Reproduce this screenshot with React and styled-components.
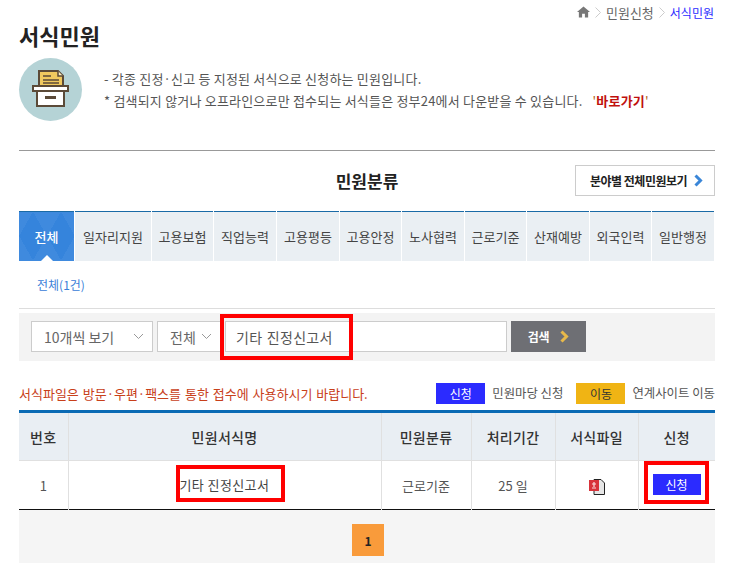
import React from 'react';
import styled, { createGlobalStyle } from 'styled-components';

const Global = createGlobalStyle`
  html, body {
    margin: 0;
    padding: 0;
    height: 563px;
    overflow: hidden;
    background: #fff;
  }
  body {
    font-family: "Noto Sans CJK KR", "Noto Sans", sans-serif;
    color: #555;
    font-size: 12px;
  }
  * { box-sizing: border-box; }
`;

const Page = styled.div`
  width: 696px;
  margin-left: 19px;
`;

const Crumbs = styled.div`
  display: flex;
  justify-content: flex-end;
  align-items: center;
  height: 24px;
  padding-right: 1px;
  font-size: 13px;
  color: #666;
  gap: 5px;
`;

const CrumbNow = styled.span`
  color: #2b2bff;
  font-size: 12px;
`;

const Title = styled.h1`
  margin: 0;
  height: 34px;
  font-size: 22px;
  line-height: 22px;
  font-weight: 700;
  color: #222;
`;

const Intro = styled.div`
  display: flex;
  align-items: center;
  gap: 22px;
  height: 63px;
`;

const IntroCircle = styled.div`
  width: 63px;
  height: 63px;
  padding-bottom: 2px;
  border-radius: 50%;
  background: #b5d3d6;
  display: flex;
  align-items: center;
  justify-content: center;
  flex: none;
`;

const IntroText = styled.div`
  font-size: 13px;
  letter-spacing: 0.2px;
  line-height: 22px;
  color: #555;
`;

const GoLink = styled.span`
  color: #b5651d;
  margin-left: 10px;
  b {
    color: #c0100c;
  }
`;

const Rule = styled.div`
  height: 1px;
  background: #999;
  margin-top: 29px;
`;

const ClassHead = styled.div`
  position: relative;
  display: flex;
  align-items: center;
  justify-content: center;
  height: 60px;
  padding-bottom: 1px;
`;

const ClassTitle = styled.h2`
  margin: 0;
  font-size: 17px;
  font-weight: 700;
  color: #222;
`;

const AllButton = styled.a`
  position: absolute;
  right: 0;
  top: 14px;
  width: 140px;
  height: 31px;
  padding-left: 3px;
  border: 1px solid #ccc;
  display: flex;
  align-items: center;
  justify-content: center;
  gap: 7px;
  font-size: 12px;
  font-weight: 700;
  letter-spacing: -0.5px;
  color: #222;
`;

const Tabs = styled.div`
  display: grid;
  grid-template-columns: 55px 76px 61px 62px 62px 61px 62px 61px 62px 61px 62px;
  column-gap: 1px;
`;

const Tab = styled.div`
  position: relative;
  height: 50px;
  display: flex;
  align-items: center;
  justify-content: center;
  font-size: 13px;
  border-top: 1px solid #1a6aa6;
  background-color: ${(p) => (p.$active ? '#3584dc' : '#eaeff3')};
  background-image: ${(p) =>
    p.$active
      ? `linear-gradient(60deg, rgba(255,255,255,.05) 25%, transparent 25%, transparent 75%, rgba(255,255,255,.05) 75%),
         linear-gradient(120deg, rgba(255,255,255,.05) 25%, transparent 25%, transparent 75%, rgba(255,255,255,.05) 75%)`
      : 'none'};
  background-size: 28px 48px;
  color: ${(p) => (p.$active ? '#fff' : '#444')};
  font-weight: ${(p) => (p.$active ? 500 : 400)};
  &::after {
    content: '';
    display: ${(p) => (p.$active ? 'block' : 'none')};
    position: absolute;
    left: 50%;
    bottom: 0;
    margin-left: -6px;
    border: 6px solid transparent;
    border-top: 0;
    border-bottom-color: #fff;
  }
`;

const SubTab = styled.div`
  height: 48px;
  padding-left: 18px;
  display: flex;
  align-items: center;
  color: #3a80d8;
  font-size: 12px;
  border-bottom: 1px solid #ddd;
`;

const SearchBar = styled.div`
  position: relative;
  display: flex;
  align-items: flex-start;
  gap: 4px;
  height: 48px;
  margin-top: 4px;
  padding: 8px 0 0 12px;
  background: #f3f3f3;
`;

const Select = styled.div`
  width: ${(p) => p.$w}px;
  height: 31px;
  background: #fff;
  border: 1px solid #ccc;
  display: flex;
  align-items: center;
  justify-content: space-between;
  padding: 0 8px 0 12px;
  font-size: 14px;
  color: #666;
`;

const SearchInput = styled.div`
  width: 282px;
  height: 31px;
  background: #fff;
  border: 1px solid #ccc;
  display: flex;
  align-items: center;
  padding-left: 10px;
  font-size: 14px;
  letter-spacing: 0.3px;
  word-spacing: 1px;
  color: #555;
`;

const SearchButton = styled.button`
  width: 75px;
  height: 31px;
  border: 0;
  background: #6e6f74;
  color: #fff;
  font: inherit;
  font-size: 12px;
  font-weight: 700;
  letter-spacing: -0.3px;
  display: flex;
  align-items: center;
  justify-content: center;
  gap: 11px;
`;

const InputMark = styled.div`
  position: absolute;
  left: 201px;
  top: 1px;
  width: 133px;
  height: 46px;
  border: 4px solid #f00;
`;

const Notice = styled.div`
  display: flex;
  align-items: center;
  height: 49px;
  padding-top: 15px;
  font-size: 13px;
`;

const NoticeText = styled.span`
  color: #c8401a;
  flex: 1;
  word-spacing: 1px;
`;

const Badge = styled.span`
  width: 49px;
  height: 21px;
  display: flex;
  align-items: center;
  justify-content: center;
  font-size: 12px;
  background: ${(p) => p.$bg};
  color: ${(p) => p.$fg};
`;

const LegendLabel = styled.span`
  margin-left: 7px;
  margin-right: ${(p) => p.$gap || 0}px;
  font-size: 12.4px;
  color: #555;
`;

const Table = styled.table`
  width: 696px;
  table-layout: fixed;
  border-collapse: collapse;
  border-top: 3px solid #0a6ab4;
  border-bottom: 1px solid #111;
`;

const Th = styled.th`
  height: 49px;
  background: #e9eef3;
  border-right: 1px solid #e0e0e0;
  border-bottom: 1px solid #e0e0e0;
  font-size: 14px;
  font-weight: 500;
  letter-spacing: 0.3px;
  color: #333;
  &:last-child { border-right: 0; }
`;

const Td = styled.td`
  height: 48px;
  padding: 0;
  text-align: center;
  border-right: 1px solid #e0e0e0;
  font-size: 13px;
  color: #555;
  &:last-child { border-right: 0; }
`;

const NameMark = styled.span`
  display: inline-block;
  width: 109px;
  height: 37px;
  margin: 0 0 3px 11px;
  line-height: 31px;
  border: 4px solid #f00;
  font-size: 13px;
  letter-spacing: 0.4px;
  text-align: left;
  white-space: nowrap;
  color: #444;
  vertical-align: middle;
`;

const ApplyMark = styled.div`
  width: 65px;
  height: 43px;
  margin: 0 0 5px 5px;
  padding: 4px 0 0 1px;
  border: 4px solid #f00;
  display: flex;
  align-items: center;
  justify-content: center;
`;

const ApplyButton = styled.span`
  width: 48px;
  height: 21px;
  display: flex;
  align-items: center;
  justify-content: center;
  background: #2b2bff;
  color: #fff;
  font-size: 12px;
`;

const Pager = styled.div`
  height: 54px;
  background: #f5f5f5;
  display: flex;
  justify-content: center;
  padding: 14px 0 0 2px;
`;

const PageButton = styled.span`
  width: 32px;
  height: 32px;
  background: #f99b3b;
  color: #222;
  font-weight: 700;
  font-size: 12px;
  display: flex;
  align-items: center;
  justify-content: center;
`;

const HomeIcon = () => (
  <svg width="13" height="12" viewBox="0 0 14 12">
    <path d="M7 0 L14 6 L12 6 L12 12 L8.5 12 L8.5 8 L5.5 8 L5.5 12 L2 12 L2 6 L0 6 Z" fill="#777" />
  </svg>
);

const CrumbArrow = () => (
  <svg width="6" height="11" viewBox="0 0 6 11">
    <path d="M0.5 0.5 L5.5 5.5 L0.5 10.5" fill="none" stroke="#ccc" strokeWidth="1" />
  </svg>
);

const BoxIcon = () => (
  <svg width="37" height="37" viewBox="0 0 37 37">
    <path d="M7 1 H26 L31 6 V16 H7 Z" fill="#f1c95f" stroke="#5b4a38" strokeWidth="2" />
    <path d="M26 1 V6 H31" fill="#fbeec0" stroke="#5b4a38" strokeWidth="1.5" />
    <path d="M11 6 H19 M11 10 H27 M11 13 H27" stroke="#5b4a38" strokeWidth="1.5" />
    <rect x="1" y="16" width="35" height="5" fill="#fff" stroke="#5b4a38" strokeWidth="2" />
    <rect x="5" y="21" width="27" height="15" fill="#fff" stroke="#5b4a38" strokeWidth="2" />
    <rect x="13" y="26" width="11" height="3" fill="#5b4a38" />
  </svg>
);

const Chevron = ({ color }) => (
  <svg width="9" height="13" viewBox="0 0 9 13">
    <path d="M1.5 1.5 L6.5 6.5 L1.5 11.5" fill="none" stroke={color} strokeWidth="3" />
  </svg>
);

const SelectArrow = () => (
  <svg width="11" height="7" viewBox="0 0 11 7">
    <path d="M1 1 L5.5 5.5 L10 1" fill="none" stroke="#999" strokeWidth="1" />
  </svg>
);

const FileIcon = () => (
  <svg width="16" height="16" viewBox="0 0 16 16" style={{ verticalAlign: 'middle' }}>
    <path d="M5 0.5 H12 L15.5 4 V15.5 H5 Z" fill="#e6e6e6" stroke="#222" strokeWidth="1" />
    <rect x="0" y="1" width="10" height="11" fill="#d8333a" />
    <path d="M5 3 V8 M3 5 H7 M3 9 H7" stroke="#fbdcdc" strokeWidth="1.2" />
  </svg>
);

const tabs = ['일자리지원', '고용보험', '직업능력', '고용평등', '고용안정', '노사협력', '근로기준', '산재예방', '외국인력', '일반행정'];

const App = () => (
  <Page>
    <Global />
    <Crumbs>
      <HomeIcon />
      <CrumbArrow />
      <span>민원신청</span>
      <CrumbArrow />
      <CrumbNow>서식민원</CrumbNow>
    </Crumbs>
    <Title>서식민원</Title>
    <Intro>
      <IntroCircle>
        <BoxIcon />
      </IntroCircle>
      <IntroText>
        - 각종 진정·신고 등 지정된 서식으로 신청하는 민원입니다.
        <br />
        * 검색되지 않거나 오프라인으로만 접수되는 서식들은 정부24에서 다운받을 수 있습니다.
        <GoLink>'<b>바로가기</b>'</GoLink>
      </IntroText>
    </Intro>
    <Rule />
    <ClassHead>
      <ClassTitle>민원분류</ClassTitle>
      <AllButton>
        분야별 전체민원보기
        <Chevron color="#3a86d8" />
      </AllButton>
    </ClassHead>
    <Tabs>
      <Tab $active>전체</Tab>
      {tabs.map((name) => (
        <Tab key={name}>{name}</Tab>
      ))}
    </Tabs>
    <SubTab>전체(1건)</SubTab>
    <SearchBar>
      <Select $w={122}>
        10개씩 보기
        <SelectArrow />
      </Select>
      <Select $w={64}>
        전체
        <SelectArrow />
      </Select>
      <SearchInput>기타 진정신고서</SearchInput>
      <SearchButton>
        검색
        <Chevron color="#e8b94a" />
      </SearchButton>
      <InputMark />
    </SearchBar>
    <Notice>
      <NoticeText>서식파일은 방문·우편·팩스를 통한 접수에 사용하시기 바랍니다.</NoticeText>
      <Badge $bg="#2b2bff" $fg="#fff">신청</Badge>
      <LegendLabel $gap={13}>민원마당 신청</LegendLabel>
      <Badge $bg="#f0b414" $fg="#333">이동</Badge>
      <LegendLabel>연계사이트 이동</LegendLabel>
    </Notice>
    <Table>
      <colgroup>
        <col width="49" />
        <col width="313" />
        <col width="90" />
        <col width="84" />
        <col width="83" />
        <col width="77" />
      </colgroup>
      <thead>
        <tr>
          <Th>번호</Th>
          <Th>민원서식명</Th>
          <Th>민원분류</Th>
          <Th>처리기간</Th>
          <Th>서식파일</Th>
          <Th>신청</Th>
        </tr>
      </thead>
      <tbody>
        <tr>
          <Td>1</Td>
          <Td>
            <NameMark>기타 진정신고서</NameMark>
          </Td>
          <Td>근로기준</Td>
          <Td>25 일</Td>
          <Td>
            <FileIcon />
          </Td>
          <Td>
            <ApplyMark>
              <ApplyButton>신청</ApplyButton>
            </ApplyMark>
          </Td>
        </tr>
      </tbody>
    </Table>
    <Pager>
      <PageButton>1</PageButton>
    </Pager>
  </Page>
);

export default App;
